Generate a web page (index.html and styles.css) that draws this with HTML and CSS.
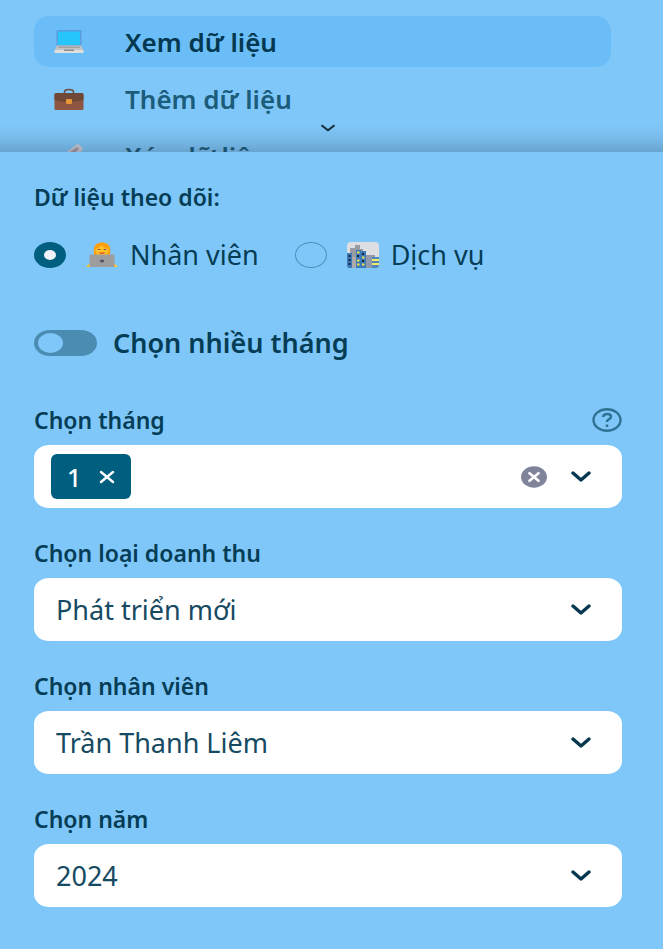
FILE: index.html
```html
<!DOCTYPE html>
<html lang="vi">
<head>
<meta charset="utf-8">
<meta name="viewport" content="width=device-width, initial-scale=1">
<title>Xem dữ liệu</title>
<link rel="stylesheet" href="styles.css">
</head>
<body>
<nav class="menu">
  <a class="menu-item active" href="#view" aria-current="page">
    <svg class="emoji" viewBox="0 0 30 26" aria-hidden="true">
      <rect x="2.500" y="1" width="25" height="16" rx="1" fill="#5c9be0"/>
      <rect x="4" y="2.500" width="22" height="13.500" fill="#26c6fa"/>
      <path d="M3 16.500h24l2.500 5H.5z" fill="#c4c4c4"/>
      <path d="M4.500 17.500h21l.8 1.500H3.700z" fill="#a2a2a2"/>
      <path d="M.5 21h29v3H.5z" fill="#dedede"/>
      <path d="M10 20.500h10V22H10z" fill="#8c8c8c"/>
    </svg>
    <span>Xem dữ liệu</span>
  </a>
  <a class="menu-item" href="#add">
    <svg class="emoji" viewBox="0 0 30 26" aria-hidden="true">
      <path d="M10.500 8V6q0-2.500 4.500-2.500T19.500 6v2" fill="none" stroke="#6d4c41" stroke-width="1.600"/>
      <rect x=".5" y="7" width="29" height="17" rx="1.500" fill="#8d5542"/>
      <path d="M.5 9q0-2 1.500-2h26q1.500 0 1.500 2v5q-7 2-14.500 2T.5 14z" fill="#704838"/>
      <rect x="12" y="13" width="6" height="5" rx="1" fill="#e69537"/>
    </svg>
    <span>Thêm dữ liệu</span>
  </a>
  <a class="menu-item" href="#delete">
    <svg class="emoji" viewBox="0 0 30 26" aria-hidden="true">
      <path d="M10 11 22 2q2-1.500 4 .5l2 2q1.500 1.500 0 3L16 20z" fill="#d3ccd5"/>
      <path d="m12 12 11-8 2 2-10 9z" fill="#a99da8"/>
      <path d="m10 11 6 9-5 4-8-7z" fill="#ba6b67"/>
    </svg>
    <span>Xóa dữ liệu</span>
  </a>
  <button class="menu-more" type="button" aria-label="Mở rộng">
    <svg viewBox="0 0 16 8" aria-hidden="true"><path d="m1.500 1.200 6.500 5 6.500-5"/></svg>
  </button>
</nav>

<main class="panel">
  <form>
    <fieldset class="tracking">
      <legend>Dữ liệu theo dõi:</legend>
      <div class="options">
        <label class="option">
          <input type="radio" name="tracking" checked>
          <svg class="option-icon" viewBox="0 0 32 26" aria-hidden="true">
            <path d="M8 13Q6.500 2 13 1q3-1.500 6 0 6.500 1 5 12z" fill="#ff9f0d"/>
            <ellipse cx="16" cy="8.500" rx="6.500" ry="6" fill="#ffc02a"/>
            <path d="M9.500 7q3.500-1 5.500-3.500Q18 6 22.500 7q-1-5-6.500-5T9.500 7z" fill="#ff9f0d"/>
            <path d="M11.800 7.500h2.500m3.400 0h2.500" stroke="#795548" stroke-width="1.200"/>
            <path d="M13.500 10.500q2.500 1.800 5 0" fill="none" stroke="#e34b24" stroke-width="1.400"/>
            <path d="M.5 25q1-3 4-3v3zm31 0q-1-3-4-3v3z" fill="#ffc928"/>
            <rect x="3.500" y="12.500" width="25" height="12.500" rx="1" fill="#9d9d9d"/>
            <ellipse cx="16" cy="19" rx="2.300" ry="1.500" fill="#5c5267"/>
          </svg>
          <span>Nhân viên</span>
        </label>
        <label class="option">
          <input type="radio" name="tracking">
          <svg class="option-icon" viewBox="0 0 32 26" aria-hidden="true">
            <rect width="32" height="26" rx="4" fill="#dcdee1"/>
            <path d="M3 9V6h5V3h5v4h3v19H3z" fill="#999ca4"/>
            <path d="M17 13h11v13H17z" fill="#929aa9"/>
            <path d="M0 11h5v15H2q-2 0-2-3zM9 8h5v18H9zM14 9h5v17h-5z" fill="#3e79b8"/>
            <path d="M5 15h4v11H5z" fill="#aaa"/>
            <path d="M1.500 13h2v2h-2zm0 4h2v2h-2zm0 4h2v2h-2zM10 13h2v2h-2zm5-2h2v2h-2zm0 7h2v2h-2z" fill="#182641"/>
            <path d="M10 9.500h2.500v2H10zm0 8h2.500v2H10zm0 4h2.500v2H10zM15 14.500h2.500v2H15zm0 7h2.500v2H15z" fill="#f2e34d"/>
            <path d="M25 15h7v8q0 3-3 3h-4z" fill="#4c86bd"/>
            <path d="M25 17h7v2h-7zm0 4h7v2h-7z" fill="#f3ec62"/>
          </svg>
          <span>Dịch vụ</span>
        </label>
      </div>
    </fieldset>

    <label class="switch">
      <input type="checkbox" role="switch">
      <span>Chọn nhiều tháng</span>
    </label>

    <div class="field">
      <div class="field-head">
        <label for="month">Chọn tháng</label>
        <button class="help" type="button" aria-label="Trợ giúp">
          <svg viewBox="0 0 30 24" aria-hidden="true">
            <ellipse cx="15" cy="12" rx="13.500" ry="10.800"/>
            <path d="M11 9q.5-3 4.200-3Q19 6 19 8.700q0 1.600-2.200 2.600-1.800.8-1.800 2.200v.5M15 16.500V19"/>
          </svg>
        </button>
      </div>
      <div class="control multi">
        <button class="chip" type="button" aria-label="Bỏ tháng 1">
          <span>1</span>
          <svg viewBox="0 0 16 14" aria-hidden="true"><path d="m2 2 12 10M14 2 2 12"/></svg>
        </button>
        <input id="month" type="text" autocomplete="off">
        <button class="clear" type="button" aria-label="Xóa tất cả">
          <svg viewBox="0 0 26 22" aria-hidden="true">
            <ellipse cx="13" cy="11" rx="13" ry="10.700"/>
            <path d="m8.500 7.200 9 7.600m0-7.600-9 7.600"/>
          </svg>
        </button>
        <svg class="chevron" viewBox="0 0 20 12" aria-hidden="true"><path d="m2 2 8 7 8-7"/></svg>
      </div>
    </div>

    <div class="field">
      <div class="field-head"><label for="revenue">Chọn loại doanh thu</label></div>
      <div class="control">
        <select id="revenue"><option>Phát triển mới</option></select>
        <svg class="chevron" viewBox="0 0 20 12" aria-hidden="true"><path d="m2 2 8 7 8-7"/></svg>
      </div>
    </div>

    <div class="field">
      <div class="field-head"><label for="employee">Chọn nhân viên</label></div>
      <div class="control">
        <select id="employee"><option>Trần Thanh Liêm</option></select>
        <svg class="chevron" viewBox="0 0 20 12" aria-hidden="true"><path d="m2 2 8 7 8-7"/></svg>
      </div>
    </div>

    <div class="field">
      <div class="field-head"><label for="year">Chọn năm</label></div>
      <div class="control">
        <select id="year"><option>2024</option></select>
        <svg class="chevron" viewBox="0 0 20 12" aria-hidden="true"><path d="m2 2 8 7 8-7"/></svg>
      </div>
    </div>
  </form>
</main>
</body>
</html>
```
FILE: styles.css
```css
* {
  box-sizing: border-box;
}

body {
  margin: 0;
  background: #80c7f9;
  color: #043d55;
  font: 27px/34px "Noto Sans", sans-serif;
}

button,
input,
select {
  margin: 0;
  padding: 0;
  border: 0;
  background: none;
  color: inherit;
  font: inherit;
}

svg {
  display: block;
  flex: none;
}

/* Menu: collapsed list that fades under the panel */
.menu {
  position: relative;
  display: flex;
  flex-direction: column;
  gap: 6px;
  height: 152px;
  padding: 16px 52px 0 34px;
  overflow: hidden;
}

.menu::after {
  content: "";
  position: absolute;
  inset: auto 0 0;
  height: 28px;
  background: linear-gradient(rgba(20, 40, 60, 0), rgba(20, 40, 60, 0.07) 50%, rgba(20, 40, 60, 0.22));
  pointer-events: none;
}

.menu-item {
  display: flex;
  flex: none;
  align-items: center;
  gap: 41px;
  height: 51px;
  padding: 0 20px;
  border-radius: 15px;
  color: #1b5c7b;
  font-size: 26px;
  font-weight: 600;
  text-decoration: none;
}

.menu-item.active {
  background: #6abdf6;
  color: #033850;
}

.emoji {
  width: 30px;
  height: 26px;
}

.menu-more {
  position: absolute;
  right: 41px;
  bottom: 20px;
  left: 34px;
}

.menu-more svg {
  width: 16px;
  height: 8px;
  margin: 0 auto;
  fill: none;
  stroke: #152b38;
  stroke-width: 2;
}

.panel {
  padding: 28px 41px 40px 34px;
}

.tracking {
  margin: 0;
  padding: 0;
  border: 0;
}

.tracking legend,
.field-head {
  padding: 0;
  font-size: 23px;
  font-weight: 600;
}

.options {
  display: flex;
  gap: 36px;
  padding-top: 24px;
}

.option {
  display: flex;
  align-items: center;
}

.option input {
  display: grid;
  flex: none;
  place-items: center;
  width: 32px;
  height: 26px;
  margin-right: 20px;
  border: 1px solid #4b91b8;
  border-radius: 50%;
  appearance: none;
}

.option input:checked {
  border: 0;
  background: #005e7e;
}

.option input:checked::before {
  content: "";
  width: 12px;
  height: 10px;
  border-radius: 50%;
  background: #f0f3f7;
}

.option-icon {
  width: 32px;
  height: 26px;
  margin-right: 12px;
}

.switch {
  display: flex;
  align-items: center;
  gap: 16px;
  margin: 54px 0 43px;
  font-weight: 600;
}

.switch input {
  display: flex;
  flex: none;
  align-items: center;
  width: 63px;
  height: 26px;
  padding: 0 4px;
  border-radius: 16px / 13px;
  background: #4b8cb3;
  appearance: none;
}

.switch input::before {
  content: "";
  width: 25px;
  height: 20px;
  border-radius: 50%;
  background: #80c7f9;
}

.switch input:checked {
  justify-content: flex-end;
}

.field {
  margin-bottom: 28px;
}

.field-head {
  display: flex;
  align-items: center;
  justify-content: space-between;
  margin-bottom: 8px;
}

.help svg {
  width: 30px;
  height: 24px;
  fill: none;
  stroke: #2d7293;
  stroke-width: 2.4;
}

.control {
  display: grid;
  align-items: center;
  height: 63px;
  border-radius: 15px / 13px;
  background: #fff;
}

.control > select,
.control > .chevron {
  grid-area: 1 / 1;
}

select {
  width: 100%;
  height: 100%;
  padding: 0 64px 0 22px;
  border-radius: inherit;
  color: #164a62;
  appearance: none;
}

.chevron {
  width: 20px;
  height: 12px;
  margin-right: 31px;
  justify-self: end;
  fill: none;
  stroke: #053850;
  stroke-linecap: round;
  stroke-linejoin: round;
  stroke-width: 3.4;
  pointer-events: none;
}

.control.multi {
  display: flex;
  padding-left: 17px;
}

.multi input {
  flex: 1;
  min-width: 0;
}

.chip {
  display: flex;
  align-items: center;
  gap: 18px;
  height: 45px;
  padding: 0 16px;
  border-radius: 6px;
  background: #005e7e;
  color: #fff;
  font-size: 25px;
  font-weight: 500;
}

.chip svg {
  width: 16px;
  height: 14px;
  fill: none;
  stroke: #fff;
  stroke-linecap: round;
  stroke-width: 2.4;
}

.clear {
  margin-right: 24px;
}

.clear svg {
  width: 26px;
  height: 22px;
  fill: #80849a;
}

.clear path {
  stroke: #fff;
  stroke-linecap: round;
  stroke-width: 2.6;
}
```
